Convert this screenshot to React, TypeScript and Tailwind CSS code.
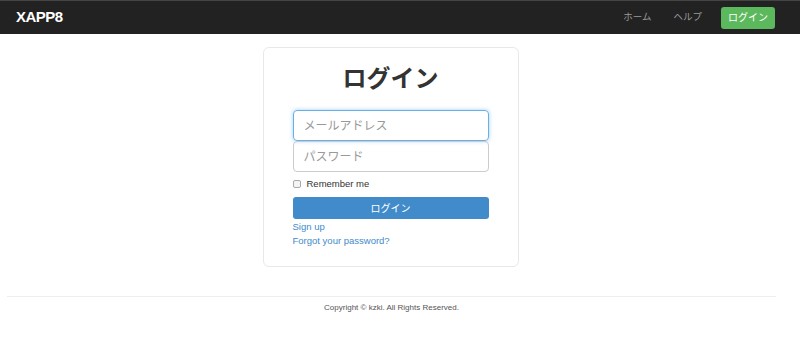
import React from "react";

const App = () => {
  return (
    <div
      className="min-h-[347px] bg-white text-[#333]"
      style={{ fontFamily: '"Liberation Sans", "Noto Sans CJK JP", sans-serif' }}
    >
      <nav className="h-[34px] bg-[#222] border-t border-[#444] flex items-center justify-between pl-[16px] pr-[25px]">
        <span className="text-white font-bold text-[15px] tracking-[-0.5px]">XAPP8</span>
        <div className="flex items-center">
          <a className="text-[9.5px] text-[#999] mr-[22px]">ホーム</a>
          <a className="text-[9.5px] text-[#999] mr-[19px]">ヘルプ</a>
          <button className="bg-[#5cb85c] text-white text-[10px] rounded-[3px] w-[54px] h-[22px]">
            ログイン
          </button>
        </div>
      </nav>

      <div className="pr-[19px]">
        <div className="flex justify-center pt-[13px]">
          <div className="w-[256px] h-[220px] border border-[#e8e8e8] rounded-[6px] px-[29px] pt-[14px]">
            <h1 className="text-center text-[24px] font-bold leading-[34px] mb-[14px]">ログイン</h1>
            <input
              className="block w-full h-[31px] border border-[#66afe9] rounded-[4px] px-[10px] text-[12px] shadow-[0_0_4px_rgba(102,175,233,0.6)] outline-none placeholder:text-[#999]"
              placeholder="メールアドレス"
            />
            <input
              type="text"
              className="block w-full h-[31px] border border-[#ccc] rounded-[4px] px-[10px] text-[12px] outline-none placeholder:text-[#999]"
              placeholder="パスワード"
            />
            <label className="flex items-center mt-[6px] text-[9.5px] h-[12px]">
              <span className="w-[8px] h-[8px] border border-[#aaa] rounded-[2px] bg-[#f4f4f4] mr-[6px]" />
              Remember me
            </label>
            <button className="block w-full h-[22px] bg-[#428bca] text-white text-[10px] rounded-[3px] mt-[7px]">
              ログイン
            </button>
            <div className="mt-[1px] flex flex-col text-[9.5px] text-[#428bca] leading-[14px]">
              <a>Sign up</a>
              <a>Forgot your password?</a>
            </div>
          </div>
        </div>

        <footer className="mt-[29px] ml-[7px] mr-[5px] border-t border-[#eee] pt-[5px] text-center text-[8px] text-[#555]">
          Copyright © kzki. All Rights Reserved.
        </footer>
      </div>
    </div>
  );
};

export default App;
